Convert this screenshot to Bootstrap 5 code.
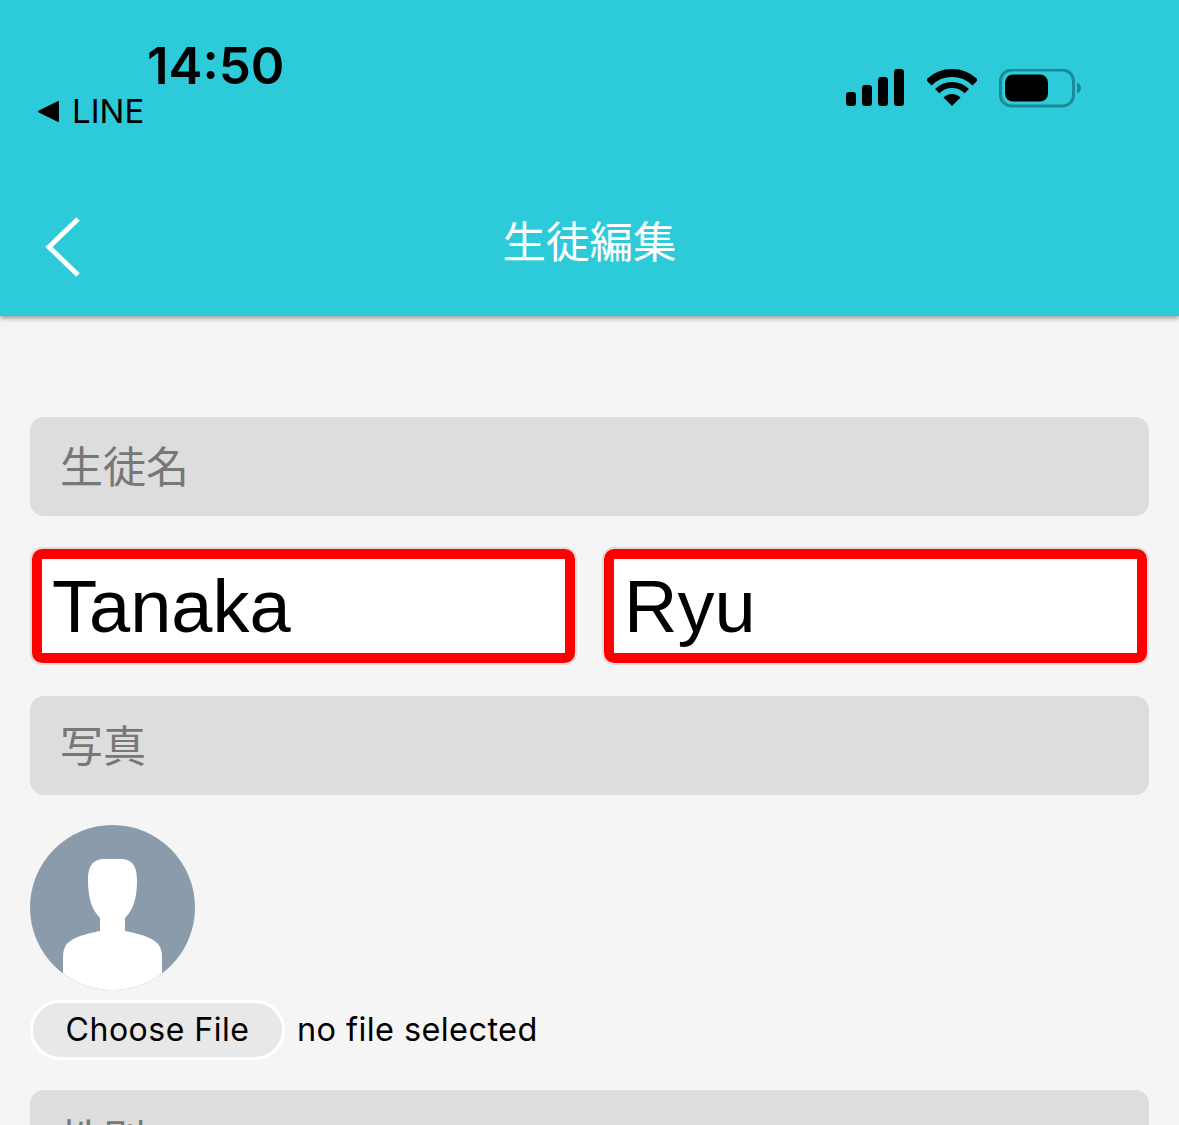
<!DOCTYPE html>
<html lang="ja">
<head>
  <meta charset="UTF-8">
  <title>生徒編集</title>
  <link href="https://cdn.jsdelivr.net/npm/bootstrap@5.3.3/dist/css/bootstrap.min.css" rel="stylesheet">
  <style>
    html, body { height: 1125px; overflow: hidden; }
    body { background: #f5f5f5; font-family: Inter, "Noto Sans CJK JP", sans-serif; color: #000; }
    .app-head { height: 316px; background: #2dcbd9; box-shadow: 0 2px 5px rgba(0,0,0,.4); }
    .status-row { height: 180px; }
    .status-left { padding-top: 36px; padding-left: 38px; }
    .clock { font-size: 51px; line-height: 60px; font-weight: 600; margin-left: 109px; }
    .back-app { font-size: 33px; line-height: 40px; margin-top: -5px; gap: 13px; }
    .status-icons { padding-top: 69px; padding-right: 98px; gap: 22px; }
    .status-icons .signal-icon { margin-right: 1px; margin-left: -1px; }
    .nav-row { height: 124px; display: grid; grid-template-columns: 1fr auto 1fr; align-items: center; }
    .page-title { font-family: "Noto Sans CJK JP", sans-serif; font-weight: 400; font-size: 43.500px; line-height: 60px; color: #fff; padding-bottom: 4px; }
    .back-chevron { margin-left: 44px; margin-top: 10px; display: block; }
    .edit-form { padding: 101px 30px 0; }
    .field-label { height: 99px; background: #ddd; border-radius: 14px; padding: 0 0 4px 30px; color: #777; font-family: "Noto Sans CJK JP", sans-serif; font-weight: 400; font-size: 43px; }
    .name-row { gap: 25px; margin: 31px 0 31px; }
    .name-box { flex: 1 1 0; height: 118px; border: 2px solid #ddd; border-radius: 12px; background: #fff; min-width: 0; }
    .name-input { display: block; width: 100%; height: 100%; border: 10px solid #f00; border-radius: 10px; outline: 0; background: #fff; padding: 0 0 0 10px; font-family: "Liberation Sans", Arial, sans-serif; font-size: 74px; color: #000; }
    .avatar-pic { display: block; margin-top: 30px; }
    .file-row { margin: 10px 0 30px; height: 60px; }
    .file-btn { width: 255px; height: 60px; border: 3px solid #fff; border-radius: 30px; background: #e8e8e8; font-size: 32px; letter-spacing: .5px; color: #000; padding: 0; }
    .file-name { margin-left: 12px; font-size: 32.500px; letter-spacing: .4px; }
  </style>
</head>
<body>

<header class="app-head">
  <div class="status-row d-flex justify-content-between">
    <div class="status-left">
      <div class="clock">14:50</div>
      <div class="back-app d-flex align-items-center">
        <svg width="21" height="21" viewBox="0 0 21 21"><path d="M21 1V20C21 21 20.400 21.200 19.600 20.800L.8 11.600C-.2 11 -.2 10 .8 9.400L19.600 .2C20.400 -.2 21 0 21 1Z" fill="#000"/></svg>
        <span>LINE</span>
      </div>
    </div>
    <div class="status-icons d-flex align-items-start">
      <svg class="signal-icon" width="58" height="38" viewBox="0 0 58 38" fill="#000">
        <rect x="0" y="23" width="10" height="14" rx="3"/>
        <rect x="16" y="16" width="10" height="21" rx="3"/>
        <rect x="32" y="8" width="10" height="29" rx="3"/>
        <rect x="48" y="0" width="10" height="37" rx="3"/>
      </svg>
      <svg width="50" height="38" viewBox="0 0 50 38" fill="none" stroke="#000">
        <path d="M1.7 13.7A33 33 0 0 1 48.3 13.7" stroke-width="8"/>
        <path d="M10.2 22.2A21 21 0 0 1 39.8 22.2" stroke-width="6"/>
        <path d="M25 37L16.5 28.5A12 12 0 0 1 33.5 28.5Z" fill="#000" stroke="none"/>
      </svg>
      <svg width="82" height="40" viewBox="0 0 82 40">
        <rect x="1.5" y="1" width="73" height="36" rx="11" fill="none" stroke="#1b8a98" stroke-width="3"/>
        <rect x="6" y="5.500" width="43" height="27" rx="8" fill="#000"/>
        <path d="M78 13.500C80.500 14.500 82 16.500 82 19S80.500 23.500 78 24.500Z" fill="#1b8a98"/>
      </svg>
    </div>
  </div>
  <div class="nav-row">
    <div>
      <svg class="back-chevron" width="38" height="62" viewBox="0 0 38 62" fill="none" stroke="#fff" stroke-width="5">
        <path d="M34 3L5 31L34 59"/>
      </svg>
    </div>
    <div class="page-title">生徒編集</div>
    <div></div>
  </div>
</header>

<main class="edit-form">
  <div class="field-label d-flex align-items-center">生徒名</div>

  <div class="name-row d-flex">
    <div class="name-box"><input class="name-input" type="text" value="Tanaka"></div>
    <div class="name-box"><input class="name-input" type="text" value="Ryu"></div>
  </div>

  <div class="field-label d-flex align-items-center">写真</div>

  <svg class="avatar-pic" width="165" height="165" viewBox="0 0 165 165">
    <defs><clipPath id="avatarClip"><circle cx="82.500" cy="82.500" r="82.500"/></clipPath></defs>
    <circle cx="82.500" cy="82.500" r="82.500" fill="#8a9bab"/>
    <path clip-path="url(#avatarClip)" fill="#fff" d="M58 55C58 42 62 34 75 34H90C103 34 107 42 107 55C107 74 103 85 95 93V106C110 109 126 113 130 122C132 126 132 130 132 136V170H33V136C33 130 33 126 35 122C39 113 55 109 70 106V93C62 85 58 74 58 55Z"/>
  </svg>

  <div class="file-row d-flex align-items-center">
    <button class="file-btn" type="button">Choose File</button>
    <span class="file-name">no file selected</span>
  </div>

  <div class="field-label d-flex align-items-center">性別</div>
</main>

<script src="https://cdn.jsdelivr.net/npm/bootstrap@5.3.3/dist/js/bootstrap.bundle.min.js"></script>
</body>
</html>
